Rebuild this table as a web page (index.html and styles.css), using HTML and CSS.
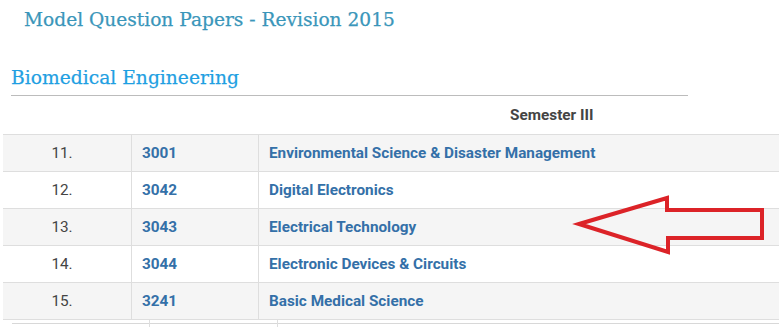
FILE: index.html
```html
<!DOCTYPE html>
<html>
<head>
<meta charset="utf-8">
<link rel="stylesheet" href="styles.css">
</head>
<body>
<div class="page">
  <h1 class="title">Model Question Papers - Revision 2015</h1>
  <h2 class="dept">Biomedical Engineering</h2>
  <div class="table-wrap">
    <table class="papers">
      <thead>
        <tr><th class="c-no"></th><th class="c-code"></th><th class="c-name">Semester III</th></tr>
      </thead>
      <tbody>
        <tr class="odd"><td class="c-no">11.</td><td class="c-code">3001</td><td class="c-name">Environmental Science &amp; Disaster Management</td></tr>
        <tr><td class="c-no">12.</td><td class="c-code">3042</td><td class="c-name">Digital Electronics</td></tr>
        <tr class="odd"><td class="c-no">13.</td><td class="c-code">3043</td><td class="c-name">Electrical Technology</td></tr>
        <tr><td class="c-no">14.</td><td class="c-code">3044</td><td class="c-name">Electronic Devices &amp; Circuits</td></tr>
        <tr class="odd"><td class="c-no">15.</td><td class="c-code">3241</td><td class="c-name">Basic Medical Science</td></tr>
      </tbody>
    </table>
  </div>
  <div class="next"><span class="n1"></span><span class="n2"></span><span class="n3"></span></div>
  <svg class="arrow" width="779" height="327" viewBox="0 0 779 327">
    <polygon points="579,224 667,198 667,210 762,210 762,238 668,238 668,252" fill="none" stroke="#dc2328" stroke-width="4" stroke-linejoin="miter"/>
  </svg>
</div>
</body>
</html>
```
FILE: styles.css
```css
html, body {
  margin: 0;
  padding: 0;
  background: #fff;
  overflow: hidden;
}
.page {
  position: relative;
  width: 779px;
  height: 327px;
  overflow: hidden;
}
.title {
  margin: 8px 0 0 24px;
  font-family: "DejaVu Serif", serif;
  font-weight: normal;
  font-size: 18.6px;
  line-height: 24px;
  color: #3a96ba;
  -webkit-text-stroke: 0.25px #3a96ba;
}
.dept {
  margin: 34px 0 0 11px;
  width: 677px;
  padding-bottom: 5px;
  border-bottom: 1px solid #bcbcbc;
  font-family: "DejaVu Serif", serif;
  font-weight: normal;
  font-size: 18.7px;
  line-height: 24px;
  color: #1f9fe2;
  -webkit-text-stroke: 0.25px #1f9fe2;
}
.table-wrap {
  margin-left: 3px;
  width: 776px;
  overflow: hidden;
}
.papers {
  width: 842px;
  border-collapse: collapse;
  font-family: Roboto, "Liberation Sans", sans-serif;
  font-size: 15.3px;
}
.papers th {
  height: 38px;
  padding: 0;
  font-weight: bold;
  color: #444;
  border-bottom: 1px solid #dedede;
}
.papers td {
  height: 36px;
  padding: 0 10px;
  border-top: 1px solid #dedede;
  border-bottom: 1px solid #dedede;
  vertical-align: middle;
}
.papers tr.odd td {
  background: #f5f5f5;
}
.papers .c-no {
  width: 118px;
  padding: 0 10px 0 0;
  text-align: center;
  color: #444;
}
.c-code {
  width: 106px;
  font-weight: bold;
  color: #3470a8;
}
.c-name {
  font-weight: bold;
  color: #3470a8;
}
.papers th.c-name {
  color: #444;
  text-align: center;
}
.papers td.c-code, .papers td.c-name {
  border-left: 1px solid #dedede;
}
.next {
  display: flex;
  margin-left: 12px;
  height: 8px;
  background: linear-gradient(#d8d8d8, #d8d8d8) 0 3px / 100% 1px no-repeat;
}
.n1 { width: 137px; }
.n2 { width: 127px; border-left: 1px solid #dedede; }
.n3 { flex: 1; border-left: 1px solid #dedede; }
.arrow {
  position: absolute;
  left: 0;
  top: 0;
}
```
